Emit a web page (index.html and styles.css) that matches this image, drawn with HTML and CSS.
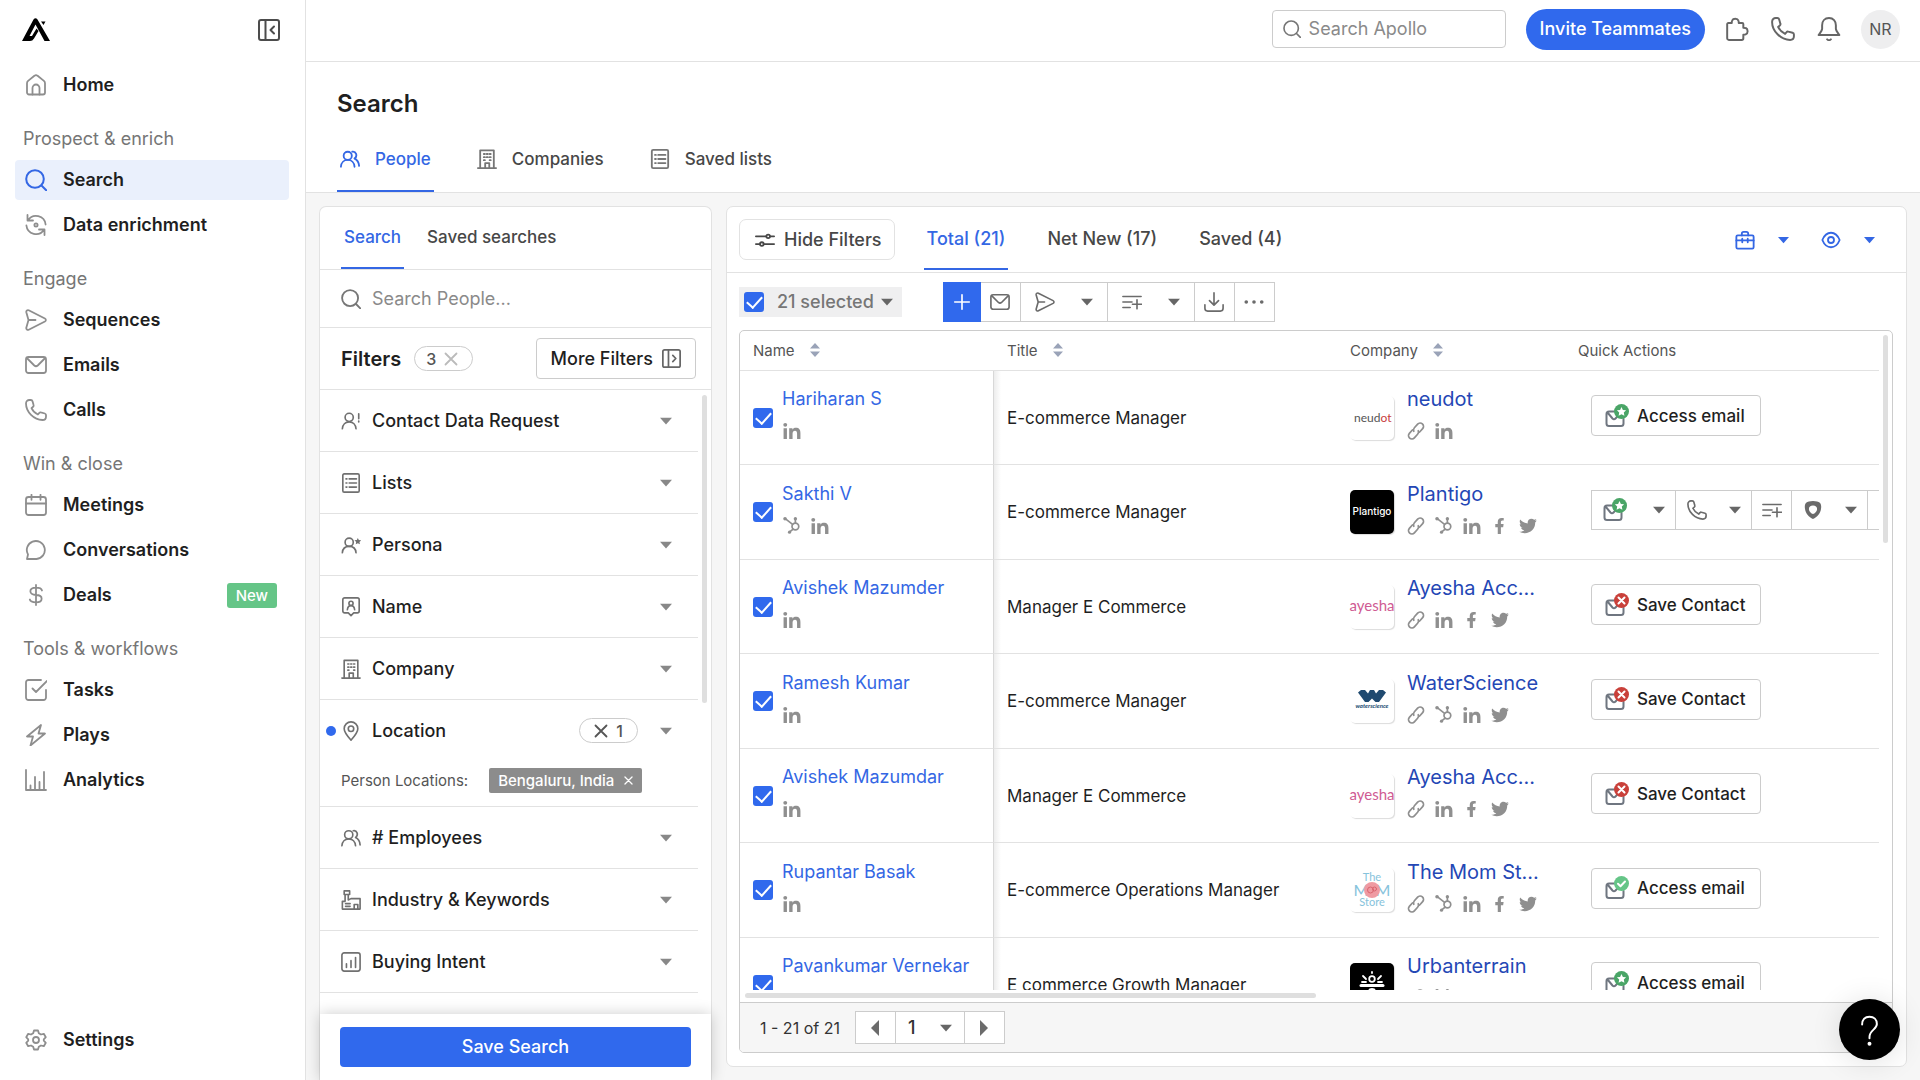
FILE: index.html
```html
<!DOCTYPE html>
<html lang="en">
<head>
<meta charset="utf-8">
<meta name="viewport" content="width=device-width, initial-scale=1">
<title>Search - Apollo</title>
<link rel="stylesheet" href="styles.css">
</head>
<body>
<svg class="sprite" aria-hidden="true">
  <symbol id="i-home" viewBox="0 0 22 22"><path d="M2 9.2c0-.9.4-1.700 1.100-2.300l6.300-5.100c.9-.8 2.300-.8 3.200 0l6.300 5.100c.7.6 1.100 1.400 1.100 2.300V18.500a2 2 0 0 1-2 2H4a2 2 0 0 1-2-2z"/><path d="M7.500 20.500V14a3.500 3.500 0 0 1 7 0v6.500"/></symbol>
  <symbol id="i-search" viewBox="0 0 22 22"><circle cx="10" cy="10" r="8.800"/><path d="M16.500 16.500l4.700 4.700"/></symbol>
  <symbol id="i-enrich" viewBox="0 0 22 22"><path d="M2.500 1v5.500H8M3 6.300a9.600 9.600 0 0 1 17.600 4.200M19.500 21v-5.500H14M19 15.700A9.600 9.600 0 0 1 1.400 11.500"/><circle cx="11" cy="11" r="1.600"/></symbol>
  <symbol id="i-send" viewBox="0 0 22 22"><path d="M1.300 3.200C1 1.700 2.400.7 3.700 1.300l16.200 8.200c1.300.7 1.300 2.300 0 3L3.700 20.700c-1.300.6-2.700-.4-2.400-1.900L3.500 11zM3.500 11h7"/></symbol>
  <symbol id="i-mail" viewBox="0 0 22 22"><rect x="1" y="3" width="20" height="16" rx="2.500"/><path d="M1.800 4l7.500 7.500c1 .9 2.400.9 3.400 0L20.200 4"/></symbol>
  <symbol id="i-phone" viewBox="0 0 22 22"><path d="M1 4.500C1 2.200 2.600 1 4.300 1h1.600c.8 0 1.400.5 1.600 1.200l1.100 3.900c.2.600 0 1.200-.5 1.600L6.500 9.100c1.300 2.800 3.600 5.100 6.400 6.400l1.400-1.600c.4-.5 1-.7 1.600-.5l3.900 1.100c.7.2 1.200.8 1.200 1.600v1.600c0 1.700-1.200 3.300-3.500 3.300C8.900 20.700 1 13 1 4.500z"/></symbol>
  <symbol id="i-calendar" viewBox="0 0 22 22"><rect x="1" y="3" width="20" height="18" rx="2.500"/><path d="M1 9.500h20M6.500.8v5M15.500.8v5"/></symbol>
  <symbol id="i-chat" viewBox="0 0 22 22"><path d="M2 20l1-4.500A9 9 0 1 1 11.500 20z"/></symbol>
  <symbol id="i-dollar" viewBox="0 0 22 22"><path d="M11 1v20M17 6.500C16.500 4.500 14.500 3.700 11 3.700c-7.500 0-7.500 7.300 0 7.300s7.500 7.300 0 7.300c-3.500 0-5.700-.8-6.200-2.800"/></symbol>
  <symbol id="i-task" viewBox="0 0 22 22"><path d="M16 1H3.500A2.500 2.500 0 0 0 1 3.500v15A2.500 2.500 0 0 0 3.500 21h15a2.500 2.500 0 0 0 2.500-2.500V11M7.500 9.500l3.500 3.500L22 2"/></symbol>
  <symbol id="i-bolt" viewBox="0 0 22 22"><path d="M16 1L2 12.500h6L5.500 21.500 20 9.500h-6.500z"/></symbol>
  <symbol id="i-bars" viewBox="0 0 22 22"><path d="M1 1v20h20M5.500 20v-3.500M10 20V8M14.500 20v-7M19 20V3"/></symbol>
  <symbol id="i-gear" viewBox="0 0 22 22"><path d="M9 1.500h4l.8 2.700 2.200 1.300 2.800-.7 2 3.400-2 2.100v1.400l2 2.100-2 3.400-2.800-.7-2.200 1.300L13 20.500H9l-.8-2.700L6 16.500l-2.800.7-2-3.400 2-2.100v-1.400l-2-2.100 2-3.400 2.800.7 2.200-1.300z"/><circle cx="11" cy="11" r="3"/></symbol>
  <symbol id="i-panel-left" viewBox="0 0 22 22"><rect x="1" y="1" width="20" height="20" rx="2"/><path d="M7.500 1v20M16 7.500L12.500 11l3.500 3.500"/></symbol>
  <symbol id="i-panel-right" viewBox="0 0 22 22"><rect x="1" y="1" width="20" height="20" rx="2"/><path d="M7.500 1v20M12.500 7.500L16 11l-3.500 3.500"/></symbol>
  <symbol id="i-puzzle" viewBox="0 0 22 22"><path d="M3 5.500h3.200c0-1 0-1.600.3-2.200C7.500 1 11.500 1 12.300 3.300c.3.6.3 1.200.3 2.200h3.200a1 1 0 0 1 1 1v3.300c1 0 1.600 0 2.200.3 2.300.9 2.300 4.900 0 5.800-.6.300-1.200.3-2.200.3v3.300a1.500 1.500 0 0 1-1.500 1.500H3.500A1.500 1.500 0 0 1 2 19.500V6.500a1 1 0 0 1 1-1z"/></symbol>
  <symbol id="i-bell" viewBox="0 0 22 22"><path d="M11 1C7 1 4.700 4 4.700 7.500v3.300c0 1.600-1.200 3-3.200 5.700h19c-2-2.700-3.200-4.100-3.200-5.700V7.500C17.300 4 15 1 11 1zM9.300 20.500a2.500 2.500 0 0 0 3.400 0"/></symbol>
  <symbol id="i-people" viewBox="0 0 22 22"><circle cx="8.500" cy="7.500" r="4.500"/><path d="M1 19.500c.3-4.500 3.300-7.500 7.500-7.500s7.200 3 7.500 7.500M13.500 3c4-.8 6.300 4.600 2.500 7.500 3 1.300 4.700 4.200 5 8"/></symbol>
  <symbol id="i-building" viewBox="0 0 22 22"><path d="M1 21h20M3.500 21V1.500h15V21M9 21v-5.500h4.500V21M7.500 5.500h1.200M10.700 5.500h1.200M13.900 5.500h1.200M7.500 9h1.200M10.700 9h1.200M13.900 9h1.200M7.500 12.300h1.200M13.900 12.300h1.200"/></symbol>
  <symbol id="i-list" viewBox="0 0 22 22"><rect x="2" y="1" width="18" height="20" rx="1.500"/><path d="M5.500 6.500h1M9 6.500h8M5.500 11h1M9 11h8M5.500 15.500h1M9 15.500h8"/></symbol>
  <symbol id="i-person-alert" viewBox="0 0 22 22"><circle cx="9" cy="7" r="4.500"/><path d="M1.500 19.500c.3-4.500 3.300-7.500 7.500-7.500s7.200 3 7.500 7.500M19.500 3v5.500M19.500 11v1"/></symbol>
  <symbol id="i-person-star" viewBox="0 0 22 22"><circle cx="9" cy="8" r="4.500"/><path d="M1.500 19.500c.3-4.500 3.300-7 7.500-7s7.200 2.500 7.500 7"/><path class="solid" d="M18.500 3.200l1.100 2.400 2.600.3-1.900 1.800.5 2.600-2.300-1.300-2.300 1.300.5-2.600-1.900-1.800 2.600-.3z"/></symbol>
  <symbol id="i-badge" viewBox="0 0 22 22"><path d="M4 1h14a2 2 0 0 1 2 2v12.500a2 2 0 0 1-2 2h-4L11 20.500l-3-3H4a2 2 0 0 1-2-2V3a2 2 0 0 1 2-2z"/><circle cx="11" cy="7" r="2.300"/><path d="M7 14c.3-3 1.800-4.500 4-4.500s3.700 1.500 4 4.500"/></symbol>
  <symbol id="i-pin" viewBox="0 0 22 22"><path d="M11 21C7 16.500 3.500 12.700 3.500 8.500a7.500 7.500 0 0 1 15 0C18.500 12.700 15 16.500 11 21z"/><circle cx="11" cy="8.500" r="3"/></symbol>
  <symbol id="i-factory" viewBox="0 0 22 22"><path d="M1.500 21V12.500H4.500V5H8v6l3-1.500h10V21zM3.500 1h6v4h-6zM14.500 21v-5h4v5M5 15h5M5 18h5"/></symbol>
  <symbol id="i-intent" viewBox="0 0 22 22"><rect x="1" y="1" width="20" height="20" rx="2.500"/><path d="M6 17v-4M11 17V9.500M16 17V6"/></symbol>
  <symbol id="i-scores" viewBox="0 0 22 22"><circle cx="16" cy="6" r="5"/><path d="M1 21l9-9"/></symbol>
  <symbol id="i-sliders" viewBox="0 0 22 22"><path d="M1 7h11M17 7h4M1 15.500h4M10 15.500h11"/><circle cx="14.500" cy="7" r="2"/><circle cx="7.500" cy="15.500" r="2"/></symbol>
  <symbol id="i-briefcase" viewBox="0 0 22 22"><rect x="1.500" y="6" width="19" height="14.500" rx="1.500"/><path d="M7.500 6V4A2 2 0 0 1 9.500 2h3a2 2 0 0 1 2 2v2M1.500 11.500h5.500M9 11.500h4M15 11.500h5.500M8 9.500v4M14 9.500v4"/></symbol>
  <symbol id="i-eye" viewBox="0 0 22 22"><path d="M1.500 11C3.500 6 7 3 11 3S18.500 6 20.500 11C18.500 16 15 19 11 19S3.500 16 1.500 11z"/><circle cx="11" cy="11" r="3.300"/></symbol>
  <symbol id="i-caret" viewBox="0 0 12 8"><path class="solid" d="M0 .8h12L6 7.500z"/></symbol>
  <symbol id="i-prev" viewBox="0 0 12 18"><path class="solid" d="M10 1v16L2 9z"/></symbol>
  <symbol id="i-next" viewBox="0 0 12 18"><path class="solid" d="M2 1v16l8-8z"/></symbol>
  <symbol id="i-sort" viewBox="0 0 12 16"><path class="solid" d="M1 6.500h10L6 1zM1 9.500h10L6 15z"/></symbol>
  <symbol id="i-x" viewBox="0 0 14 14"><path d="M1.500 1.500l11 11M12.500 1.500l-11 11"/></symbol>
  <symbol id="i-plus" viewBox="0 0 22 22"><path d="M11 3v16M3 11h16"/></symbol>
  <symbol id="i-list-add" viewBox="0 0 22 22"><path d="M1 5h20M1 11h10M1 17h8M16.500 8.500v10M11.500 13.500h10"/></symbol>
  <symbol id="i-download" viewBox="0 0 22 22"><path d="M11 1v13M6 9.500l5 5 5-5M1 14v4a3 3 0 0 0 3 3h14a3 3 0 0 0 3-3v-4"/></symbol>
  <symbol id="i-dots" viewBox="0 0 22 22"><g class="solid"><circle cx="2.500" cy="11" r="2"/><circle cx="11" cy="11" r="2"/><circle cx="19.500" cy="11" r="2"/></g></symbol>
  <symbol id="i-shield" viewBox="0 0 22 22"><path class="solid" fill-rule="evenodd" d="M11 1c3.500 0 6 .8 7.500 2C20 4.500 20.300 7 19.800 10c-.8 5-4.300 9-8.800 11-4.500-2-8-6-8.800-11C1.700 7 2 4.500 3.500 3 5 1.800 7.500 1 11 1zM11 6c-3 0-4.700 1.700-4.500 4.300S9 15 11 15.500c2-.5 4.300-2.600 4.500-5.200S14 6 11 6z"/></symbol>
  <symbol id="i-linkedin" viewBox="0 0 16 16"><path class="solid" d="M.5 5.500h3V15h-3zM2 .8a1.700 1.700 0 1 1 0 3.500A1.700 1.700 0 0 1 2 .8zM5.500 5.500h2.900v1.300c.6-1 1.700-1.600 3-1.600 3 0 4.100 1.800 4.100 4.700V15h-3v-4.700c0-1.500-.5-2.500-1.800-2.500-1.400 0-2.200.9-2.200 2.600V15h-3z"/></symbol>
  <symbol id="i-hubspot" viewBox="0 0 16 16"><circle cx="11" cy="8.500" r="3"/><path d="M11 5.500V1.500M8.500 6.500L2 1.500M9 10.700L6 13.300"/><g class="solid"><circle cx="11" cy="1.500" r="1.500"/><circle cx="1.800" cy="1.600" r="1.600"/><circle cx="5.800" cy="13.500" r="1.400"/></g></symbol>
  <symbol id="i-link" viewBox="0 0 16 16"><g transform="rotate(-48 8 8)"><path d="M6.500 5H2.500a3 3 0 0 0 0 6h4.300a3 3 0 0 0 2.700-1.700M9.500 11h4a3 3 0 0 0 0-6H9.200a3 3 0 0 0-2.700 1.700"/></g></symbol>
  <symbol id="i-facebook" viewBox="0 0 16 16"><path class="solid" d="M6 15V9H3.800V6.300H6V4.400C6 2.100 7.300.8 9.400.8c.9 0 1.900.1 1.900.1v2.300H10.200c-1.100 0-1.400.7-1.400 1.300v1.800h2.400L10.800 9H8.800v6z"/></symbol>
  <symbol id="i-twitter" viewBox="0 0 16 16"><path class="solid" d="M14.400 4.800c.2 5.600-4.300 9.800-9.500 9.600-1.700 0-3.200-.5-4.600-1.300 1.700.1 3.200-.3 4.400-1.300-1.400-.1-2.500-1-2.900-2.200.5.1 1 .1 1.400-.1C1.600 9.200.6 7.900.7 6.300c.4.3.9.4 1.400.4C.7 5.600.2 3.800 1.100 2.300c1.600 2 4 3.300 6.700 3.400C7.300 3.500 8.900 1.500 11 1.500c1 0 1.800.4 2.400 1 .7-.1 1.400-.4 2-.8-.2.800-.7 1.400-1.300 1.800.6-.1 1.200-.2 1.700-.5-.4.700-.9 1.300-1.400 1.800z"/></symbol>
  <symbol id="i-envelope" viewBox="0 0 24 24"><path d="M14 7.500H4A2.500 2.500 0 0 0 1.500 10v9.500A2.500 2.500 0 0 0 4 22h12a2.500 2.500 0 0 0 2.500-2.500V15M2.500 8.500l5 6c1 1.100 2 1.100 3 0l2-2.200"/></symbol>
  <symbol id="i-mail-star" viewBox="0 0 24 24"><use href="#i-envelope"/><circle class="dot-green" cx="16.500" cy="7.500" r="7.500"/><path class="mark" d="M16.500 3l1.400 2.900 3.200.4-2.300 2.200.6 3.200-2.900-1.500-2.900 1.500.6-3.200-2.300-2.200 3.200-.4z"/></symbol>
  <symbol id="i-mail-x" viewBox="0 0 24 24"><use href="#i-envelope"/><circle class="dot-red" cx="16.500" cy="7.500" r="7.500"/><path class="mark-line" d="M13.500 4.500l6 6M19.500 4.500l-6 6"/></symbol>
  <symbol id="i-mail-check" viewBox="0 0 24 24"><use href="#i-envelope"/><circle class="dot-mint" cx="16.500" cy="7.500" r="7.500"/><path class="mark-line" d="M13 7.800l2.500 2.400 4.500-4.700"/></symbol>
  <symbol id="i-workflow" viewBox="0 0 22 22"><path d="M7 2H3.500v5H7M3 20a4 4 0 0 1 4-5"/></symbol>
</svg>

<div class="app">
  <nav class="sidebar" aria-label="Main">
    <div class="brand">
      <a href="#" class="logo" aria-label="Apollo"><svg viewBox="0 0 28 24"><path d="M0 23L11.500 1.500Q13.500-1 15.500 1.500L28 23H22.500L13.500 6.500 7.500 18H10l4.500-7.500 2 2.500-4.500 7.500Q10.500 23 8 23z"/><path d="M19 3.500h4.500L21.500 7z"/></svg></a>
      <button class="icon-btn collapse" aria-label="Collapse"><svg class="icon"><use href="#i-panel-left"/></svg></button>
    </div>
    <ul class="menu">
      <li><a href="#"><svg class="icon"><use href="#i-home"/></svg>Home</a></li>
    </ul>
    <h2>Prospect &amp; enrich</h2>
    <ul class="menu">
      <li><a href="#" class="current"><svg class="icon"><use href="#i-search"/></svg>Search</a></li>
      <li><a href="#"><svg class="icon"><use href="#i-enrich"/></svg>Data enrichment</a></li>
    </ul>
    <h2>Engage</h2>
    <ul class="menu">
      <li><a href="#"><svg class="icon"><use href="#i-send"/></svg>Sequences</a></li>
      <li><a href="#"><svg class="icon"><use href="#i-mail"/></svg>Emails</a></li>
      <li><a href="#"><svg class="icon"><use href="#i-phone"/></svg>Calls</a></li>
    </ul>
    <h2>Win &amp; close</h2>
    <ul class="menu">
      <li><a href="#"><svg class="icon"><use href="#i-calendar"/></svg>Meetings</a></li>
      <li><a href="#"><svg class="icon"><use href="#i-chat"/></svg>Conversations</a></li>
      <li><a href="#"><svg class="icon"><use href="#i-dollar"/></svg>Deals<span class="new">New</span></a></li>
    </ul>
    <h2>Tools &amp; workflows</h2>
    <ul class="menu">
      <li><a href="#"><svg class="icon"><use href="#i-task"/></svg>Tasks</a></li>
      <li><a href="#"><svg class="icon"><use href="#i-bolt"/></svg>Plays</a></li>
      <li><a href="#"><svg class="icon"><use href="#i-bars"/></svg>Analytics</a></li>
    </ul>
    <ul class="menu menu-end">
      <li><a href="#"><svg class="icon"><use href="#i-gear"/></svg>Settings</a></li>
    </ul>
  </nav>

  <div class="page">
    <header class="topbar">
      <label class="global-search"><svg class="icon"><use href="#i-search"/></svg><input type="text" placeholder="Search Apollo" aria-label="Search Apollo"></label>
      <button class="invite">Invite Teammates</button>
      <div class="shortcuts">
        <button class="icon-btn" aria-label="Extensions"><svg class="icon"><use href="#i-puzzle"/></svg></button>
        <button class="icon-btn" aria-label="Calls"><svg class="icon"><use href="#i-phone"/></svg></button>
        <button class="icon-btn" aria-label="Notifications"><svg class="icon"><use href="#i-bell"/></svg></button>
      </div>
      <button class="avatar">NR</button>
    </header>

    <div class="heading">
      <h1>Search</h1>
      <nav class="tabs" aria-label="Search type">
        <a href="#" class="current"><svg class="icon"><use href="#i-people"/></svg>People</a>
        <a href="#"><svg class="icon"><use href="#i-building"/></svg>Companies</a>
        <a href="#"><svg class="icon"><use href="#i-list"/></svg>Saved lists</a>
      </nav>
    </div>

    <div class="content">
      <aside class="filters">
        <nav class="filter-tabs" aria-label="Filters">
          <a href="#" class="current">Search</a>
          <a href="#">Saved searches</a>
        </nav>
        <label class="people-search"><svg class="icon"><use href="#i-search"/></svg><input type="text" placeholder="Search People..." aria-label="Search people"></label>
        <div class="filter-head">
          <h2>Filters</h2>
          <button class="pill pill-muted">3<svg class="x"><use href="#i-x"/></svg></button>
          <button class="more">More Filters<svg class="icon"><use href="#i-panel-right"/></svg></button>
        </div>
        <div class="filter-scroll">
          <ul class="filter-list">
            <li><button class="filter"><svg class="icon"><use href="#i-person-alert"/></svg><span>Contact Data Request</span><svg class="caret"><use href="#i-caret"/></svg></button></li>
            <li><button class="filter"><svg class="icon"><use href="#i-list"/></svg><span>Lists</span><svg class="caret"><use href="#i-caret"/></svg></button></li>
            <li><button class="filter"><svg class="icon"><use href="#i-person-star"/></svg><span>Persona</span><svg class="caret"><use href="#i-caret"/></svg></button></li>
            <li><button class="filter"><svg class="icon"><use href="#i-badge"/></svg><span>Name</span><svg class="caret"><use href="#i-caret"/></svg></button></li>
            <li><button class="filter"><svg class="icon"><use href="#i-building"/></svg><span>Company</span><svg class="caret"><use href="#i-caret"/></svg></button></li>
            <li class="active">
              <div class="filter-row">
                <button class="filter"><svg class="icon"><use href="#i-pin"/></svg><span>Location</span></button>
                <button class="pill"><svg class="x"><use href="#i-x"/></svg>1</button>
                <button class="bare" aria-label="Open location"><svg class="caret"><use href="#i-caret"/></svg></button>
              </div>
              <div class="chosen">Person Locations:<button class="tag">Bengaluru, India<svg class="x"><use href="#i-x"/></svg></button></div>
            </li>
            <li><button class="filter"><svg class="icon"><use href="#i-people"/></svg><span># Employees</span><svg class="caret"><use href="#i-caret"/></svg></button></li>
            <li><button class="filter"><svg class="icon"><use href="#i-factory"/></svg><span>Industry &amp; Keywords</span><svg class="caret"><use href="#i-caret"/></svg></button></li>
            <li><button class="filter"><svg class="icon"><use href="#i-intent"/></svg><span>Buying Intent</span><svg class="caret"><use href="#i-caret"/></svg></button></li>
            <li><button class="filter" aria-label="Scores"><svg class="icon"><use href="#i-scores"/></svg></button></li>
          </ul>
          <div class="vbar"></div>
        </div>
        <div class="save-bar"><button class="save">Save Search</button></div>
      </aside>

      <main class="results">
        <div class="results-head">
          <button class="hide-filters"><svg class="icon"><use href="#i-sliders"/></svg>Hide Filters</button>
          <nav class="counts" aria-label="Result sets">
            <a href="#" class="current">Total (21)</a>
            <a href="#">Net New (17)</a>
            <a href="#">Saved (4)</a>
          </nav>
          <div class="views">
            <button class="view" aria-label="Layouts"><svg class="icon"><use href="#i-briefcase"/></svg><svg class="caret"><use href="#i-caret"/></svg></button>
            <button class="view" aria-label="Visibility"><svg class="icon"><use href="#i-eye"/></svg><svg class="caret"><use href="#i-caret"/></svg></button>
          </div>
        </div>

        <div class="toolbar">
          <div class="selection"><input type="checkbox" checked id="all"><label for="all">21 selected</label><svg class="caret"><use href="#i-caret"/></svg></div>
          <div class="group">
            <button class="seg primary" aria-label="Save"><svg class="icon"><use href="#i-plus"/></svg></button>
            <button class="seg" aria-label="Email"><svg class="icon"><use href="#i-mail"/></svg></button>
            <button class="seg wide" aria-label="Sequence"><svg class="icon"><use href="#i-send"/></svg><svg class="caret"><use href="#i-caret"/></svg></button>
            <button class="seg wide" aria-label="Add to list"><svg class="icon"><use href="#i-list-add"/></svg><svg class="caret"><use href="#i-caret"/></svg></button>
            <button class="seg" aria-label="Export"><svg class="icon"><use href="#i-download"/></svg></button>
            <button class="seg" aria-label="More"><svg class="icon"><use href="#i-dots"/></svg></button>
          </div>
        </div>

        <div class="grid">
          <div class="grid-view">
            <div class="grid-clip">
              <table>
                <colgroup><col class="c-name"><col class="c-title"><col class="c-company"><col></colgroup>
                <thead>
                  <tr><th>Name<svg class="sort"><use href="#i-sort"/></svg></th><th>Title<svg class="sort"><use href="#i-sort"/></svg></th><th>Company<svg class="sort"><use href="#i-sort"/></svg></th><th>Quick Actions</th></tr>
                </thead>
                <tbody>
                  <tr>
                    <td><div class="person"><input type="checkbox" checked id="p1"><div class="info"><label for="p1">Hariharan S</label><div class="links"><svg><use href="#i-linkedin"/></svg></div></div></div></td>
                    <td class="title">E-commerce Manager</td>
                    <td><div class="company"><svg class="brand-logo" viewBox="0 0 44 44"><text x="4" y="26" class="lg-neudot">neud<tspan class="red">ot</tspan></text></svg><div class="info"><a href="#">neudot</a><div class="links"><svg><use href="#i-link"/></svg><svg><use href="#i-linkedin"/></svg></div></div></div></td>
                    <td class="act"><button class="action"><svg class="mail"><use href="#i-mail-star"/></svg>Access email</button></td>
                  </tr>
                  <tr>
                    <td><div class="person"><input type="checkbox" checked id="p2"><div class="info"><label for="p2">Sakthi V</label><div class="links"><svg><use href="#i-hubspot"/></svg><svg><use href="#i-linkedin"/></svg></div></div></div></td>
                    <td class="title">E-commerce Manager</td>
                    <td><div class="company"><svg class="brand-logo dark" viewBox="0 0 44 44"><text x="22" y="25" class="lg-plantigo">Plantigo</text></svg><div class="info"><a href="#">Plantigo</a><div class="links"><svg><use href="#i-link"/></svg><svg><use href="#i-hubspot"/></svg><svg><use href="#i-linkedin"/></svg><svg><use href="#i-facebook"/></svg><svg><use href="#i-twitter"/></svg></div></div></div></td>
                    <td class="act"><div class="group">
                      <button class="seg wide" aria-label="Email"><svg class="mail"><use href="#i-mail-star"/></svg><svg class="caret"><use href="#i-caret"/></svg></button>
                      <button class="seg mid" aria-label="Call"><svg class="icon"><use href="#i-phone"/></svg><svg class="caret"><use href="#i-caret"/></svg></button>
                      <button class="seg" aria-label="Add to list"><svg class="icon"><use href="#i-list-add"/></svg></button>
                      <button class="seg mid" aria-label="Stage"><svg class="icon"><use href="#i-shield"/></svg><svg class="caret"><use href="#i-caret"/></svg></button>
                      <button class="seg" aria-label="Workflow"><svg class="icon"><use href="#i-workflow"/></svg></button>
                    </div></td>
                  </tr>
                  <tr>
                    <td><div class="person"><input type="checkbox" checked id="p3"><div class="info"><label for="p3">Avishek Mazumder</label><div class="links"><svg><use href="#i-linkedin"/></svg></div></div></div></td>
                    <td class="title">Manager E Commerce</td>
                    <td><div class="company"><svg class="brand-logo" viewBox="0 0 44 44"><text x="22" y="26" class="lg-ayesha">ayesha</text></svg><div class="info"><a href="#">Ayesha Acc...</a><div class="links"><svg><use href="#i-link"/></svg><svg><use href="#i-linkedin"/></svg><svg><use href="#i-facebook"/></svg><svg><use href="#i-twitter"/></svg></div></div></div></td>
                    <td class="act"><button class="action"><svg class="mail"><use href="#i-mail-x"/></svg>Save Contact</button></td>
                  </tr>
                  <tr>
                    <td><div class="person"><input type="checkbox" checked id="p4"><div class="info"><label for="p4">Ramesh Kumar</label><div class="links"><svg><use href="#i-linkedin"/></svg></div></div></div></td>
                    <td class="title">E-commerce Manager</td>
                    <td><div class="company"><svg class="brand-logo" viewBox="0 0 44 44"><path class="navy" d="M8 13.500l3-2.500h4l3 3.500 2-3.500h4l2 3.500 3-3.500h4l3 2.500-7 9.500h-3.500L22 19.500 18.500 23H15z"/><text x="22" y="29" class="lg-water">waterscience</text></svg><div class="info"><a href="#">WaterScience</a><div class="links"><svg><use href="#i-link"/></svg><svg><use href="#i-hubspot"/></svg><svg><use href="#i-linkedin"/></svg><svg><use href="#i-twitter"/></svg></div></div></div></td>
                    <td class="act"><button class="action"><svg class="mail"><use href="#i-mail-x"/></svg>Save Contact</button></td>
                  </tr>
                  <tr>
                    <td><div class="person"><input type="checkbox" checked id="p5"><div class="info"><label for="p5">Avishek Mazumdar</label><div class="links"><svg><use href="#i-linkedin"/></svg></div></div></div></td>
                    <td class="title">Manager E Commerce</td>
                    <td><div class="company"><svg class="brand-logo" viewBox="0 0 44 44"><text x="22" y="26" class="lg-ayesha">ayesha</text></svg><div class="info"><a href="#">Ayesha Acc...</a><div class="links"><svg><use href="#i-link"/></svg><svg><use href="#i-linkedin"/></svg><svg><use href="#i-facebook"/></svg><svg><use href="#i-twitter"/></svg></div></div></div></td>
                    <td class="act"><button class="action"><svg class="mail"><use href="#i-mail-x"/></svg>Save Contact</button></td>
                  </tr>
                  <tr>
                    <td><div class="person"><input type="checkbox" checked id="p6"><div class="info"><label for="p6">Rupantar Basak</label><div class="links"><svg><use href="#i-linkedin"/></svg></div></div></div></td>
                    <td class="title">E-commerce Operations Manager</td>
                    <td><div class="company"><svg class="brand-logo" viewBox="0 0 44 44"><text x="22" y="13" class="lg-mom">The</text><text x="11" y="28" class="lg-mom big">M</text><text x="33" y="28" class="lg-mom big">M</text><circle class="rose" cx="22" cy="22" r="8"/><circle class="rose-ring" cx="20.500" cy="22" r="3"/><circle class="rose-ring" cx="24.500" cy="21" r="2"/><text x="22" y="38" class="lg-mom">Store</text></svg><div class="info"><a href="#">The Mom St...</a><div class="links"><svg><use href="#i-link"/></svg><svg><use href="#i-hubspot"/></svg><svg><use href="#i-linkedin"/></svg><svg><use href="#i-facebook"/></svg><svg><use href="#i-twitter"/></svg></div></div></div></td>
                    <td class="act"><button class="action"><svg class="mail"><use href="#i-mail-check"/></svg>Access email</button></td>
                  </tr>
                  <tr>
                    <td><div class="person"><input type="checkbox" checked id="p7"><div class="info"><label for="p7">Pavankumar Vernekar</label><div class="links"><svg><use href="#i-linkedin"/></svg></div></div></div></td>
                    <td class="title">E commerce Growth Manager</td>
                    <td><div class="company"><svg class="brand-logo dark" viewBox="0 0 44 44"><circle class="urban" cx="22" cy="16" r="2.800"/><path class="urban" d="M22 9v1M13 13l3 3M31 13l-3 3M12 19h4M28 19h4"/><path class="urban bar" d="M11 22.500h22"/><path class="urban" d="M19 28a3 2 0 0 1 6 0"/></svg><div class="info"><a href="#">Urbanterrain</a><div class="links"><svg><use href="#i-link"/></svg><svg><use href="#i-hubspot"/></svg><svg><use href="#i-linkedin"/></svg></div></div></div></td>
                    <td class="act"><button class="action"><svg class="mail"><use href="#i-mail-star"/></svg>Access email</button></td>
                  </tr>
                </tbody>
              </table>
            </div>
            <div class="vbar"></div>
          </div>
          <div class="hbar-row"><div class="hbar"></div></div>
          <div class="pager">
            <span>1 - 21 of 21</span>
            <div class="group">
              <button class="seg" aria-label="Previous page"><svg class="arrow"><use href="#i-prev"/></svg></button>
              <div class="seg page-select"><select aria-label="Page"><option>1</option></select><svg class="caret"><use href="#i-caret"/></svg></div>
              <button class="seg" aria-label="Next page"><svg class="arrow"><use href="#i-next"/></svg></button>
            </div>
          </div>
        </div>
      </main>
    </div>
  </div>
</div>
<button class="help" aria-label="Help"><svg viewBox="0 0 62 62"><path d="M23.500 26c0-5 3-8 7.500-8s7.500 3 7.500 7.500c0 5.500-7.500 6-7.500 13V40"/><circle cx="31" cy="45.500" r="2"/></svg></button>
</body>
</html>
```
FILE: styles.css
```css
:root {
  --blue: #3069ed;
  --link: #3467e4;
  --deep: #2447b5;
  --text: #1f1f1f;
  --soft: #474747;
  --muted: #767676;
  --line: #e2e2e2;
  --edge: #cccccc;
  --bg: #f6f6f6;
}
* { box-sizing: border-box; }
body {
  margin: 0;
  font-family: Inter, "Liberation Sans", sans-serif;
  font-size: 18px;
  line-height: 24px;
  color: var(--text);
  background: #fff;
}
h1, h2, ul { margin: 0; padding: 0; list-style: none; }
a { color: inherit; text-decoration: none; }
button, input, select { font: inherit; color: inherit; margin: 0; }
button { display: flex; align-items: center; border: 0; padding: 0; background: none; cursor: pointer; }
input[type="text"] { border: 0; padding: 0; background: none; outline: 0; min-width: 0; flex: 1; }
input::placeholder { color: #8a8a8a; opacity: 1; }
svg { display: block; flex: none; fill: none; stroke: currentColor; stroke-width: 2; stroke-linecap: round; stroke-linejoin: round; }
.sprite { position: absolute; width: 0; height: 0; }
.solid { fill: currentColor; stroke: none; }
.icon { width: 22px; height: 22px; }
.caret { width: 12px; height: 8px; color: #666; }
.x { width: 14px; height: 14px; }

input[type="checkbox"] {
  appearance: none;
  flex: none;
  display: flex;
  justify-content: center;
  width: 20px;
  height: 20px;
  border-radius: 3px;
  background: var(--blue);
}
input[type="checkbox"]::after {
  content: "";
  width: 7px;
  height: 13px;
  margin-top: 1px;
  border: solid #fff;
  border-width: 0 2px 2px 0;
  transform: rotate(42deg);
}

.app { display: flex; height: 100vh; }

/* Sidebar */
.sidebar { flex: none; display: flex; flex-direction: column; width: 306px; padding: 0 16px 20px 15px; border-right: 1px solid var(--line); }
.brand { display: flex; justify-content: space-between; align-items: center; height: 65px; padding: 0 9px 6px 7px; }
.logo svg { width: 28px; height: 24px; fill: #000; stroke: none; }
.collapse { color: #4c4c4c; }
.sidebar h2 { margin: 22px 0 9px; padding-left: 8px; font-size: 18px; font-weight: 400; color: var(--muted); }
.menu { display: flex; flex-direction: column; gap: 5px; }
.menu a { display: flex; align-items: center; gap: 16px; height: 40px; padding: 0 12px 0 10px; border-radius: 4px; font-weight: 600; }
.menu .icon { color: #8e8e8e; stroke-width: 1.800; }
.menu .current { background: #eaf0fc; }
.menu .current .icon { color: var(--link); stroke-width: 2; }
.menu-end { margin-top: auto; }
.new { margin-left: auto; padding: 0 9px; border-radius: 3px; background: #65c587; color: #fff; font-size: 15px; line-height: 25px; font-weight: 500; }

/* Top bar */
.page { flex: 1; min-width: 0; display: flex; flex-direction: column; }
.topbar { flex: none; display: flex; justify-content: flex-end; align-items: center; gap: 20px; height: 62px; padding: 0 20px 3px; border-bottom: 1px solid var(--line); color: #666; }
.shortcuts { display: flex; gap: 22px; }
.shortcuts .icon { width: 24px; height: 24px; stroke-width: 1.800; }
.global-search { display: flex; align-items: center; gap: 8px; width: 234px; height: 38px; padding: 0 10px; border: 1px solid var(--edge); border-radius: 4px; color: var(--muted); }
.global-search .icon { width: 18px; height: 18px; }
.invite { height: 41px; padding: 0 14px; border-radius: 21px; background: var(--blue); color: #fff; font-weight: 500; }
.avatar { justify-content: center; width: 39px; height: 39px; border-radius: 50%; background: #eeeeef; color: #555; font-size: 16px; }

/* Page heading */
.heading { flex: none; height: 131px; padding: 26px 31px 0; border-bottom: 1px solid var(--line); display: flex; flex-direction: column; }
h1 { font-size: 24px; line-height: 32px; font-weight: 600; }
.tabs { display: flex; gap: 40px; flex: 1; margin-top: 8px; font-size: 17px; font-weight: 500; color: var(--soft); }
.tabs a { display: flex; align-items: center; gap: 15px; padding: 0 3px; border-bottom: 2px solid transparent; }
.tabs .icon { width: 20px; height: 20px; color: var(--muted); }
.tabs .current, .tabs .current .icon { color: var(--link); border-color: var(--link); }

/* Content */
.content { flex: 1; min-height: 0; display: flex; gap: 14px; padding: 13px 13px 0; background: var(--bg); }
.filters { flex: none; display: flex; flex-direction: column; width: 393px; background: #fff; border: 1px solid var(--line); border-bottom: 0; border-radius: 7px 7px 0 0; }
.filter-tabs { flex: none; display: flex; gap: 20px; height: 63px; padding: 0 21px; border-bottom: 1px solid var(--line); font-size: 17px; font-weight: 500; color: var(--soft); }
.filter-tabs a { display: flex; align-items: center; padding: 0 3px; border-bottom: 2px solid transparent; }
.filter-tabs .current { color: var(--link); border-color: var(--link); }
.people-search { flex: none; display: flex; align-items: center; gap: 11px; height: 58px; padding: 0 21px; border-bottom: 1px solid var(--line); color: var(--muted); }
.people-search .icon { width: 20px; height: 20px; }
.filter-head { flex: none; display: flex; align-items: center; height: 62px; padding: 0 15px 0 21px; border-bottom: 1px solid var(--line); }
.filter-head h2 { font-size: 20px; font-weight: 600; margin-right: 13px; }
.pill { gap: 8px; height: 25px; padding: 0 14px; border: 1px solid var(--edge); border-radius: 13px; font-size: 16px; font-weight: 500; color: #555; }
.pill-muted { padding: 0 14px 0 11px; }
.pill-muted .x { color: #bbb; stroke-width: 1.500; }
.pill .x { stroke-width: 1.800; }
.more { gap: 9px; height: 41px; margin-left: auto; padding: 0 14px; border: 1px solid var(--edge); border-radius: 4px; font-weight: 500; }
.more .icon { width: 19px; height: 19px; color: #666; }
.filter-scroll { flex: 1; min-height: 0; display: flex; justify-content: space-between; overflow: hidden; }
.filter-list { flex: 1; }
.filter-list li { border-bottom: 1px solid var(--line); }
.filter { flex: 1; width: 100%; gap: 11px; height: 61px; padding: 0 26px 0 21px; font-weight: 500; text-align: left; }
.filter span { flex: 1; }
.filter .icon { width: 20px; height: 20px; color: #707070; stroke-width: 1.800; }
.filter-list .caret { color: #888; }
.filter-row { position: relative; display: flex; align-items: center; padding-right: 26px; }
.filter-row::before { content: ""; position: absolute; left: 6px; width: 10px; height: 10px; border-radius: 50%; background: var(--blue); }
.filter-row .pill { margin-right: 22px; }
.chosen { display: flex; align-items: center; gap: 21px; height: 45px; padding: 0 0 6px 21px; font-size: 15px; color: #555; }
.tag { gap: 10px; height: 25px; padding: 0 9px; border-radius: 2px; background: #8c8c8c; color: #fff; font-weight: 500; }
.tag .x { width: 9px; height: 9px; }
.vbar { flex: none; width: 5px; height: 308px; margin: 5px 4px 0; border-radius: 3px; background: #dfdfdf; }
.save-bar { flex: none; padding: 13px 20px; background: #fff; box-shadow: 0 0 14px rgba(0, 0, 0, .2); }
.save { width: 100%; height: 40px; justify-content: center; border-radius: 4px; background: var(--blue); color: #fff; font-weight: 500; }

/* Results */
.results { flex: 1; min-width: 0; display: flex; flex-direction: column; margin-bottom: 13px; background: #fff; border: 1px solid var(--line); border-radius: 7px; }
.results-head { flex: none; display: flex; align-items: center; height: 66px; padding: 0 31px 0 12px; border-bottom: 1px solid var(--line); }
.hide-filters { gap: 9px; height: 41px; padding: 0 12px 0 15px; border: 1px solid var(--line); border-radius: 7px; font-weight: 500; color: var(--soft); }
.hide-filters .icon { width: 20px; height: 20px; }
.counts { display: flex; align-self: stretch; gap: 36px; margin: 0 0 2px 29px; font-weight: 500; color: var(--soft); }
.counts a { display: flex; align-items: center; padding: 2px 3px 0; border-bottom: 2px solid transparent; }
.counts .current { color: var(--link); border-color: var(--link); }
.views { display: flex; gap: 32px; margin-left: auto; }
.view { gap: 23px; color: var(--link); }
.view .icon { width: 20px; height: 20px; }
.view .caret { width: 11px; color: inherit; }
.toolbar { flex: none; display: flex; align-items: center; gap: 41px; height: 57px; padding: 0 12px; }
.selection { display: flex; align-items: center; height: 30px; padding: 0 9px 0 5px; background: #efeff0; color: var(--muted); font-weight: 500; }
.selection label { margin: 0 7px 0 13px; }
.group { display: flex; width: max-content; border: solid var(--edge); border-width: 1px 0 1px 1px; }
.seg { justify-content: center; width: 40px; height: 38px; border-right: 1px solid var(--edge); color: #6b6b6b; background: #fff; }
.seg .icon { width: 20px; height: 20px; stroke-width: 1.800; }
.seg.wide { width: 87px; gap: 26px; }
.seg.mid { width: 76px; gap: 22px; }
.act .seg.wide { width: 84px; gap: 26px; }
.seg.primary { width: 38px; height: 40px; margin: -1px 0 -1px -1px; border: 0; background: var(--blue); color: #fff; }

/* Table */
.grid { flex: 1; min-height: 0; display: flex; flex-direction: column; margin: 0 13px 13px 12px; border: 1px solid var(--edge); border-radius: 5px; overflow: hidden; }
.grid-view { flex: 1; min-height: 0; display: flex; }
.grid-clip { flex: 1; min-width: 0; overflow: hidden; }
.grid-view .vbar { height: 208px; margin: 4px 4px 0; }
table { width: 100%; table-layout: fixed; border-collapse: separate; border-spacing: 0; }
.c-name { width: 254px; }
.c-title { width: 343px; }
.c-company { width: 228px; }
th { height: 40px; padding: 0 13px; border-bottom: 1px solid var(--line); font-size: 15px; font-weight: 400; text-align: left; color: #555; }
.sort { display: inline-block; width: 12px; height: 16px; margin-left: 14px; vertical-align: -2px; color: #9aa3b8; }
td { height: 94px; padding: 0 13px; border-bottom: 1px solid var(--line); overflow: hidden; white-space: nowrap; }
tr:nth-child(even) td { height: 95px; }
td:first-child { border-right: 1px solid #d8d8d8; }
td.title { font-size: 17px; background: linear-gradient(to right, #ededed, #fff 7px); }
.person { display: flex; align-items: center; gap: 9px; }
.person label { display: block; font-weight: 400; color: var(--link); }
.info { padding-bottom: 8px; }
.links { display: flex; gap: 10px; margin-top: 11px; color: #8f8f8f; }
.person .links { padding-left: 1px; }
.links svg { width: 18px; height: 18px; stroke-width: 1.500; }
.company { display: flex; align-items: center; gap: 13px; }
.company a { display: block; font-size: 20px; color: var(--deep); }
.act { padding: 0 0 4px 26px; }
.action { gap: 8px; height: 41px; padding: 0 15px 0 13px; border: 1px solid var(--edge); border-radius: 4px; font-size: 17px; font-weight: 500; }
.mail { width: 24px; height: 24px; color: #6f7680; }
.dot-green { fill: #4aa567; stroke: none; }
.dot-red { fill: #c9403a; stroke: none; }
.dot-mint { fill: #65c587; stroke: none; }
.mark { fill: #fff; stroke: none; }
.mark-line { stroke: #fff; }

/* Company marks */
.brand-logo { width: 44px; height: 44px; border-radius: 5px; overflow: visible; box-shadow: 1px 1px 1px rgba(0, 0, 0, .14); }
.brand-logo text { stroke: none; text-anchor: middle; }
.dark { background: #000; }
.brand-logo .lg-neudot { text-anchor: start; font: 12px Lato, sans-serif; fill: #555; }
.red { fill: #c8403c; }
.lg-plantigo { font: 500 10px Inter, sans-serif; fill: #fff; }
.lg-ayesha { font: 15px Lato, sans-serif; fill: #cf5b93; }
.navy { fill: #204a70; stroke: none; }
.lg-water { font: italic 700 6px Lato, sans-serif; fill: #204a70; }
.lg-mom { font: 11px Lato, sans-serif; fill: #86c3dc; }
.lg-mom.big { font-size: 16px; }
.rose { fill: #ef9aa2; stroke: none; }
.rose-ring { stroke: #d96570; stroke-width: 1; }
.urban { stroke: #fff; stroke-width: 1.800; }
.bar { stroke-width: 3; }

.hbar-row { flex: none; padding: 3px 5px 4px; }
.hbar { width: 50%; height: 5px; border-radius: 3px; background: #dfdfdf; }
.pager { flex: none; display: flex; align-items: center; gap: 15px; height: 50px; padding: 0 20px; border-top: 1px solid var(--edge); background: var(--bg); font-size: 16px; color: #333; }
.pager .seg { height: 31px; }
.arrow { width: 12px; height: 18px; }
.page-select { display: flex; align-items: center; width: 69px; gap: 0; }
.page-select select { width: 32px; height: 31px; appearance: none; border: 0; background: none; font-size: 18px; font-weight: 500; color: #333; }

.help { position: fixed; right: 20px; bottom: 20px; width: 61px; height: 61px; border-radius: 50%; background: #000; color: #fff; box-shadow: 0 2px 30px rgba(0, 0, 0, .12); }
.help svg { width: 61px; height: 61px; }
.help circle { fill: #fff; stroke: none; }
```
